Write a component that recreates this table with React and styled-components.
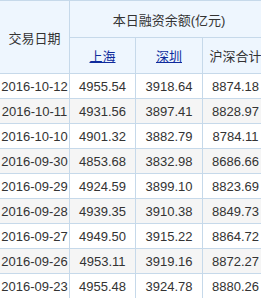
import React from 'react';
import styled, {createGlobalStyle} from "styled-components";

const GlobalStyle = createGlobalStyle`
  html, body {
    margin: 0;
    padding: 0;
    background: #fff;
    overflow: hidden;
  }
`;

const Table = styled.table`
  border-collapse: collapse;
  table-layout: fixed;
  width: 269px;
  margin-left: -1px;
  font-family: "Liberation Sans", "Noto Sans CJK SC", sans-serif;
  font-size: 13px;
  color: #333;
`;

const HeadCell = styled.th`
  background-color: #eef6fe;
  border: 1px solid #c6d9ea;
  font-weight: normal;
  height: ${({h}) => h}px;
  padding: 0;
  text-align: center;
  white-space: nowrap;
  overflow: hidden;
`;

const HeadLink = styled.a`
  color: #0f2b9c;
  text-decoration: underline;
`;

const Row = styled.tr`
  background-color: ${({striped}) => striped ? "#f5f5f5" : "#fff"};
`;

const Cell = styled.td`
  border: 1px solid #c6d9ea;
  height: 24px;
  padding: 0;
  text-align: center;
  white-space: nowrap;
  overflow: hidden;
`;

const rows = [
  ["2016-10-12", "4955.54", "3918.64", "8874.18"],
  ["2016-10-11", "4931.56", "3897.41", "8828.97"],
  ["2016-10-10", "4901.32", "3882.79", "8784.11"],
  ["2016-09-30", "4853.68", "3832.98", "8686.66"],
  ["2016-09-29", "4924.59", "3899.10", "8823.69"],
  ["2016-09-28", "4939.35", "3910.38", "8849.73"],
  ["2016-09-27", "4949.50", "3915.22", "8864.72"],
  ["2016-09-26", "4953.11", "3919.16", "8872.27"],
  ["2016-09-23", "4955.48", "3924.78", "8880.26"],
];

const App = () => {
  return (
    <>
      <GlobalStyle />
      <Table>
        <colgroup>
          <col style={{width: 70}} />
          <col style={{width: 66}} />
          <col style={{width: 67}} />
          <col style={{width: 66}} />
        </colgroup>
        <thead>
          <tr>
            <HeadCell rowSpan={2}>交易日期</HeadCell>
            <HeadCell colSpan={3} h={36}>本日融资余额(亿元)</HeadCell>
          </tr>
          <tr>
            <HeadCell h={35}><HeadLink href="#">上海</HeadLink></HeadCell>
            <HeadCell h={35}><HeadLink href="#">深圳</HeadLink></HeadCell>
            <HeadCell h={35}>沪深合计</HeadCell>
          </tr>
        </thead>
        <tbody>
          {rows.map((item, index) => (
            <Row key={index} striped={index % 2 === 1}>
              {item.map((value, i) => (
                <Cell key={i}>{value}</Cell>
              ))}
            </Row>
          ))}
        </tbody>
      </Table>
    </>
  );
};

export default App;
